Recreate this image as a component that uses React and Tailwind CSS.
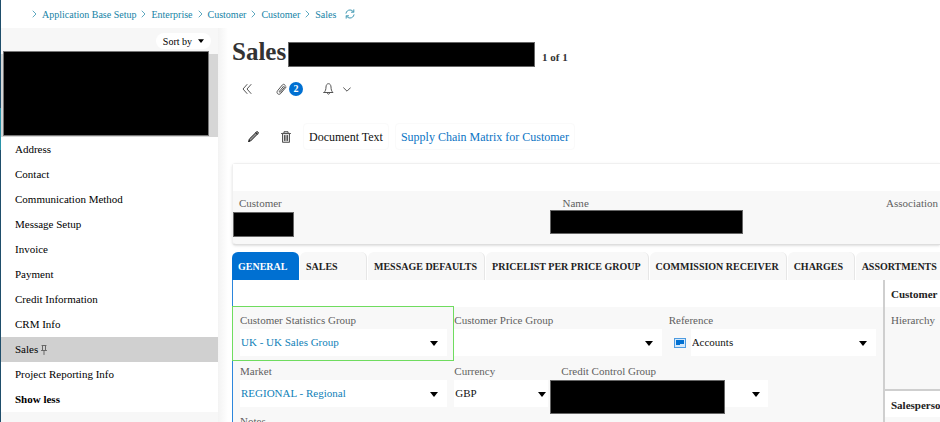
import React from 'react';

const crumbs = ['Application Base Setup', 'Enterprise', 'Customer', 'Customer', 'Sales'];

const navItems = [
  'Address',
  'Contact',
  'Communication Method',
  'Message Setup',
  'Invoice',
  'Payment',
  'Credit Information',
  'CRM Info',
  'Sales',
  'Project Reporting Info',
];

const tabs = [
  'GENERAL',
  'SALES',
  'MESSAGE DEFAULTS',
  'PRICELIST PER PRICE GROUP',
  'COMMISSION RECEIVER',
  'CHARGES',
  'ASSORTMENTS',
];

function Icon({ className, viewBox = '0 0 16 16', children }) {
  return (
    <svg
      className={className}
      viewBox={viewBox}
      fill="none"
      stroke="currentColor"
      strokeWidth="1"
      strokeLinecap="round"
      strokeLinejoin="round"
      aria-hidden="true"
    >
      {children}
    </svg>
  );
}

function Caret({ className }) {
  return (
    <svg className={className} viewBox="0 0 8 5" aria-hidden="true">
      <path d="M0 0h8L4 5z" fill="#000" />
    </svg>
  );
}

function Label({ htmlFor, className = '', children }) {
  return (
    <label htmlFor={htmlFor} className={`block whitespace-nowrap text-[11px] leading-4 text-[#5f5f5f] ${className}`}>
      {children}
    </label>
  );
}

function Select({ id, value, tone = 'text-[#111]', caret = 'right-[9px]' }) {
  return (
    <div className="relative min-w-0 flex-1">
      <select
        id={id}
        defaultValue={value}
        className={`block h-[27px] w-full appearance-none bg-white pl-px text-[11px] outline-none ${tone}`}
      >
        <option>{value}</option>
      </select>
      <Caret className={`pointer-events-none absolute top-[12px] h-[5px] w-2 ${caret}`} />
    </div>
  );
}

function Breadcrumb() {
  return (
    <nav className="flex h-7 items-center gap-[5px] pl-[31px] text-[10px] text-[#1583a6]">
      {crumbs.map((c, i) => (
        <React.Fragment key={i}>
          <Icon className="h-2 w-[5px] text-[#5fa9c0]" viewBox="0 0 5 8">
            <path d="M1 1l3 3-3 3" />
          </Icon>
          <a href="#" className="whitespace-nowrap">{c}</a>
        </React.Fragment>
      ))}
      <button type="button" aria-label="Refresh" className="ml-1 text-[#3f98b3]">
        <Icon className="h-[10px] w-[10px]" viewBox="0 0 10 10">
          <path d="M1 4.2C1.4 2.2 3 1 5 1c1.500 0 2.700.7 3.400 1.900M8.800.8v2.400H6.400M9 5.800C8.600 7.800 7 9 5 9c-1.500 0-2.700-.7-3.400-1.900M1.200 9.200V6.800h2.400" />
        </Icon>
      </button>
    </nav>
  );
}

function Sidebar() {
  return (
    <aside className="w-[217px] shrink-0 bg-[#f7f7f7]">
      <div className="flex h-[26px] items-center justify-end pr-[7px]">
        <button type="button" className="flex h-4 items-center gap-[6px] rounded-full bg-white px-[7px] text-[10px] text-black">
          Sort by
          <Caret className="h-1 w-[6px]" />
        </button>
      </div>
      <div className="flex h-[83px] items-end bg-[#d6d6d6] pb-px pl-[2px]">
        <div className="h-[85px] w-[206px] shrink-0 border border-[#777] bg-black" />
      </div>
      <ul className="bg-white text-[11px] text-black">
        {navItems.map((item) => (
          <li key={item}>
            <a
              href="#"
              className={`flex h-[25px] items-center gap-[3px] pl-[14px] ${item === 'Sales' ? 'bg-[#d0d0d0]' : ''}`}
            >
              {item}
              {item === 'Sales' && (
                <Icon className="h-[10px] w-[6px] text-[#666]" viewBox="0 0 6 10">
                  <path d="M1 .5h4M1.500.5V5M4.500.5V5M.5 5.500h5M3 5.500v4" />
                </Icon>
              )}
            </a>
          </li>
        ))}
        <li>
          <button type="button" className="flex h-[25px] w-full items-center pl-[14px] font-bold">Show less</button>
        </li>
      </ul>
    </aside>
  );
}

function RecordHeader() {
  return (
    <header>
      <div className="flex h-[39px] items-end">
        <h1 className="w-[56px] text-[25px] font-bold leading-[30px] text-[#333]">Sales</h1>
        <div className="h-[25px] w-[247px] border border-[#666] bg-black" />
        <span className="ml-[7px] pb-[2px] text-[11px] font-bold leading-4 text-[#333]">1 of 1</span>
      </div>
      <div className="mt-[12px] flex h-5 items-center pl-[10px] text-[#555]">
        <button type="button" aria-label="Collapse">
          <Icon className="h-[10px] w-[10px]" viewBox="0 0 10 10">
            <path d="M5 .5L1 5l4 4.500M9 .5L5 5l4 4.500" />
          </Icon>
        </button>
        <button type="button" aria-label="Attachments" className="ml-6 flex items-center gap-[2px]">
          <Icon className="h-3 w-[11px]" viewBox="0 0 11 12">
            <path d="M7.400 3.400L3.500 8.200c-.6.8.4 1.600 1 .9l4.300-5.200c1.300-1.700-1-3.600-2.400-2L1.600 7.700c-1.900 2.400 1.200 5 3.200 2.700l5.300-6.300" />
          </Icon>
          <span className="flex h-[14px] w-[14px] items-center justify-center rounded-full bg-[#0070d2] text-[10px] font-bold leading-none text-white">2</span>
        </button>
        <button type="button" aria-label="Notifications" className="ml-5 flex items-center gap-[9px]">
          <Icon className="h-3 w-[11px]" viewBox="0 0 11 12">
            <path d="M1 9.500h9C8.400 8 8.100 6.500 8 4 7.900 2 7 .7 5.500.7S3.100 2 3 4C2.900 6.500 2.600 8 1 9.500zM4.300 9.700c.1 1 .5 1.500 1.200 1.500s1.100-.5 1.200-1.500" />
          </Icon>
          <Icon className="h-[5px] w-2" viewBox="0 0 8 5">
            <path d="M.6.8L4 4.200 7.400.8" />
          </Icon>
        </button>
      </div>
      <div className="mt-6 flex h-[27px] items-center text-xs">
        <button type="button" aria-label="Edit" className="ml-[16px] text-[#222]">
          <Icon className="h-[11px] w-[11px]" viewBox="0 0 11 11">
            <path d="M.7 10.300l.6-2.200L8.700.8c.3-.3.700-.3 1 0l.5.5c.3.3.3.700 0 1L2.900 9.700z" fill="#999" />
            <path d="M.7 10.300l1-1M7.800 1.700l1.500 1.500" />
          </Icon>
        </button>
        <button type="button" aria-label="Delete" className="ml-[22px] text-[#555]">
          <Icon className="h-3 w-[10px]" viewBox="0 0 10 12">
            <path d="M1.500 2.700v8.600h7V2.700z" fill="#e2e2e2" />
            <path d="M.5 2.500h9M3 2.300V.7h4v1.600M3.500 4.500v5M5 4.500v5M6.500 4.500v5" />
          </Icon>
        </button>
        <button type="button" className="ml-[12px] h-full whitespace-nowrap rounded border border-[#fafafa] px-[5px] text-[#111]">
          Document Text
        </button>
        <button type="button" className="ml-[6px] h-full whitespace-nowrap rounded border border-[#fafafa] px-[5px] text-[#0b74c4]">
          Supply Chain Matrix for Customer
        </button>
      </div>
    </header>
  );
}

function SummaryCard() {
  return (
    <section className="mt-[13px] h-[82px] rounded-l border border-r-0 border-[#f0f0f0] border-b-[#dedede] bg-[#f8f8f8] shadow-sm">
      <div className="h-[27px] bg-white" />
      <div className="grid grid-cols-[6fr_6fr_1fr] pl-[6px] pt-1 text-[11px] leading-4 text-[#5f5f5f]">
        <div>
          Customer
          <div className="-ml-[6px] mt-px h-[25px] w-[61px] border border-[#666] bg-black" />
        </div>
        <div>
          Name
          <div className="-ml-[13px] -mt-px h-6 w-[193px] border border-[#666] bg-black" />
        </div>
        <div>Association</div>
      </div>
    </section>
  );
}

function Tabs() {
  return (
    <div role="tablist" className="mt-[7px] flex h-7 gap-px overflow-hidden">
      {tabs.map((t, i) => (
        <button
          key={t}
          type="button"
          role="tab"
          aria-selected={i === 0}
          className={`min-w-[67px] shrink-0 whitespace-nowrap rounded-t-md pl-[6px] pr-[7px] text-left text-[10px] font-bold ${
            i === 0 ? 'bg-[#0070d2] text-white' : 'border-r border-[#e6e6e6] bg-[#f8f8f8] text-[#222]'
          }`}
        >
          {t}
        </button>
      ))}
    </div>
  );
}

function FormPanel() {
  return (
    <section className="grid flex-1 grid-cols-[minmax(0,1fr)_57px] border-l border-[#2b86dc]">
      <div className="bg-[#f8f8f8]">
        <div className="h-[27px] bg-white" />
        <form className="grid grid-cols-3 gap-x-[7px] pl-[7px] pr-[7px]">
          <div className="relative h-[51px] pt-[5px]">
            <Label htmlFor="stat">Customer Statistics Group</Label>
            <div className="mt-px flex">
              <Select id="stat" value="UK - UK Sales Group" tone="text-[#0f7fb8]" />
            </div>
            <div className="pointer-events-none absolute -left-2 -right-[7px] -top-px h-[55px] border border-[#6fdc5f]" />
          </div>
          <div className="pt-[5px]">
            <Label htmlFor="price">Customer Price Group</Label>
            <div className="mt-px flex">
              <Select id="price" value="" caret="right-[9px]" />
            </div>
          </div>
          <div className="pt-[5px]">
            <Label htmlFor="ref">Reference</Label>
            <div className="mt-px flex items-center pl-[5px]">
              <svg className="mr-[5px] h-[10px] w-3 shrink-0" viewBox="0 0 12 10" aria-hidden="true">
                <rect x=".5" y=".5" width="11" height="9" fill="#d4e8fa" stroke="#4d9be0" />
                <path d="M2 2h8v4H6v1H2z" fill="#0070d2" />
              </svg>
              <Select id="ref" value="Accounts" />
            </div>
          </div>

          <div className="h-[51px] pt-[5px]">
            <Label htmlFor="market">Market</Label>
            <div className="mt-px flex">
              <Select id="market" value="REGIONAL - Regional" tone="text-[#0f7fb8]" />
            </div>
          </div>
          <div className="col-span-2 flex pt-[5px]">
            <div className="w-[94px]">
              <Label htmlFor="currency">Currency</Label>
              <div className="mt-px flex">
                <Select id="currency" value="GBP" caret="right-[2px]" />
              </div>
            </div>
            <div className="ml-[2px]">
              <Label htmlFor="credit" className="pl-[11px]">Credit Control Group</Label>
              <div className="mt-px flex h-[27px] w-[218px]">
                <div className="h-[34px] w-[175px] shrink-0 border border-[#666] bg-black" />
                <Select id="credit" value="" caret="right-2" />
              </div>
            </div>
          </div>

          <div className="h-[13px] overflow-hidden pt-[4px]">
            <Label>Notes</Label>
          </div>
        </form>
      </div>
      <aside className="flex flex-col overflow-hidden whitespace-nowrap border-l-2 border-[#cfcfcf] bg-[#f8f8f8] text-[11px]">
        <h2 className="h-[27px] bg-white pl-[6px] font-bold leading-[29px] text-[#222]">Customer</h2>
        <div className="h-[82px] pl-[6px] pt-[5px] leading-4 text-[#5f5f5f]">Hierarchy</div>
        <h2 className="h-[28px] border-t-2 border-[#cfcfcf] bg-white pl-[6px] font-bold leading-[29px] text-[#222]">Salesperson</h2>
      </aside>
    </section>
  );
}

export default function App() {
  return (
    <div className="flex h-screen overflow-hidden bg-white font-['Liberation_Serif',serif]">
      <div className="flex w-px shrink-0 flex-col">
        <div className="h-[108px] bg-[#1f4e6b]" />
        <div className="h-[42px] bg-[#2a93a8]" />
        <div className="flex-1 bg-[#1f4e6b]" />
      </div>
      <div className="flex min-w-0 flex-1 flex-col">
        <Breadcrumb />
        <div className="flex min-h-0 flex-1">
          <Sidebar />
          <div className="w-[10px] shrink-0 bg-linear-to-r from-[#f3f3f3] to-white" />
          <main className="flex min-w-0 flex-1 flex-col pl-1">
            <RecordHeader />
            <SummaryCard />
            <Tabs />
            <FormPanel />
          </main>
        </div>
      </div>
    </div>
  );
}
